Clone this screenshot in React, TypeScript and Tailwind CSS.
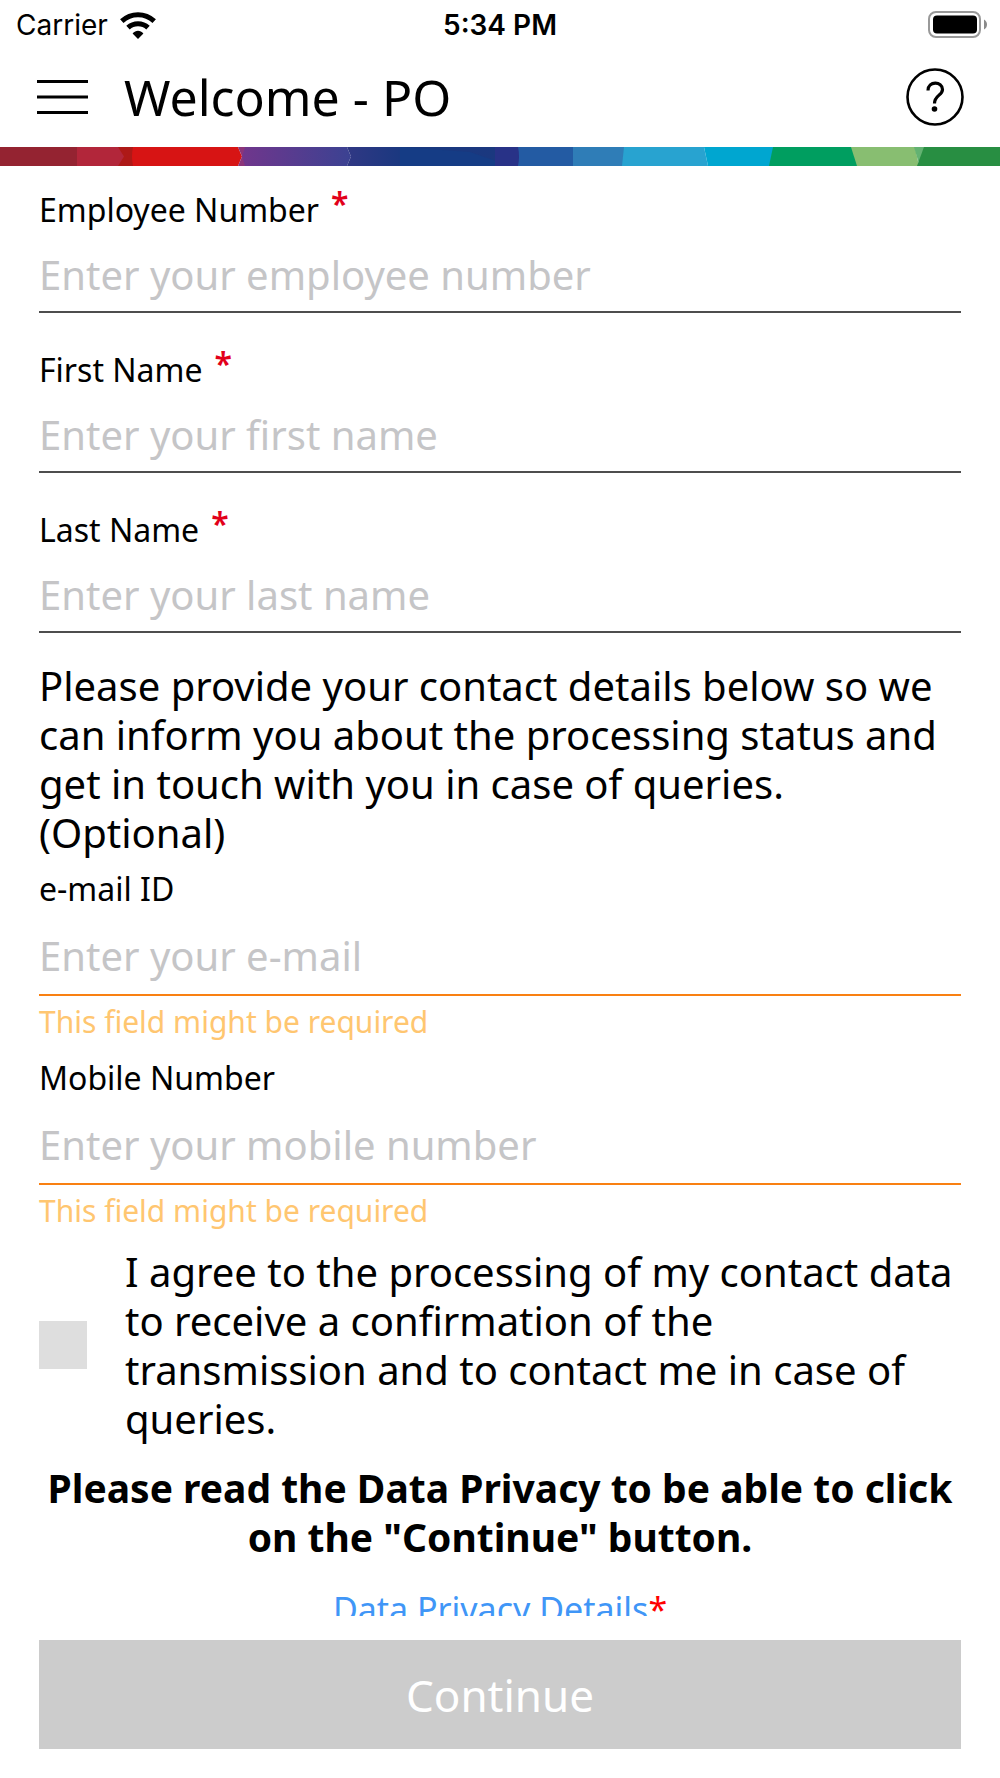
import { useState } from 'react';

interface FieldProps {
  id: string;
  label: string;
  placeholder: string;
  type?: string;
  required?: boolean;
  warning?: string;
}

function Field({ id, label, placeholder, type = 'text', required, warning }: FieldProps) {
  return (
    <div>
      <label htmlFor={id} className="flex gap-3 text-[32px] leading-10">
        {label}
        {required && <span className="-mt-1.5 text-[#e2001a] font-semibold">*</span>}
      </label>
      <input
        id={id}
        type={type}
        placeholder={placeholder}
        className={`mt-[7px] block w-full border-b-2 bg-transparent text-[40px] outline-none placeholder:text-[#c5c5c7] ${
          warning ? 'h-20 border-[#f98012]' : 'h-[76px] border-[#4d4d4d]'
        }`}
      />
      {warning && <p className="mt-1.5 text-[30px] leading-10 text-[#ffc670]">{warning}</p>}
    </div>
  );
}

function StatusBar() {
  return (
    <div className="grid h-[50px] grid-cols-3 items-center px-3 font-[Inter,sans-serif] text-[28px]">
      <div className="flex items-center gap-3 pl-1">
        <span>Carrier</span>
        <svg width="36" height="27" viewBox="0 0 36 27" fill="none" stroke="#000">
          <path d="M1.8 9.2C11 0.6 25 0.6 34.2 9.2" strokeWidth="5" />
          <path d="M8 15.6C13.6 10.4 22.4 10.4 28 15.6" strokeWidth="5" />
          <path d="M12.6 21.4C15.8 18 20.2 18 23.4 21.4L18 27Z" fill="#000" stroke="none" />
        </svg>
      </div>
      <span className="text-center font-semibold">5:34 PM</span>
      <svg className="justify-self-end" width="60" height="28" viewBox="0 0 60 28">
        <rect x="1" y="1" width="51" height="25" rx="7" fill="none" stroke="#999" strokeWidth="2" />
        <rect x="5" y="4.500" width="44" height="18" rx="4" />
        <path d="M56 8.500c4 2 4 8 0 10Z" fill="#8a8a8a" />
      </svg>
    </div>
  );
}

function ColorStrip() {
  return (
    <svg className="block h-[19px] w-full" viewBox="0 0 1000 19" preserveAspectRatio="none">
      <defs>
        <linearGradient id="violet" x1="0" x2="1">
          <stop offset="0" stopColor="#70368c" />
          <stop offset="1" stopColor="#3b4292" />
        </linearGradient>
        <linearGradient id="navy" x1="0" x2="1">
          <stop offset="0" stopColor="#303884" />
          <stop offset="0.4" stopColor="#18387f" />
          <stop offset="1" stopColor="#1b387f" />
        </linearGradient>
      </defs>
      <rect width="78" height="19" fill="#942331" />
      <rect x="77" width="48" height="19" fill="#b2263a" />
      <path d="M118 0H140V19H118L124 9.5Z" fill="#ae1917" />
      <path d="M133 0H238L242 9.5L238 19H133Q131 9.5 133 0Z" fill="#d71414" />
      <path d="M238 0H247L243 9.5L247 19H238L242 9.5Z" fill="#8c3479" />
      <path d="M245 0H347L351 9.5L347 19H245L242 9.5Z" fill="url(#violet)" />
      <path d="M347 0H496V19H347L351 9.5Z" fill="url(#navy)" />
      <path d="M400 0L470 5L496 14V19H400Z" fill="#153c85" />
      <path d="M495 0H520V19H495Z" fill="#283287" />
      <path d="M518 0H574V19H518Q520 9.5 518 0Z" fill="#235ba3" />
      <rect x="573" width="52" height="19" fill="#2f7db7" />
      <path d="M624 0H704L708 19H622Z" fill="#28a3d0" />
      <path d="M704 0H774L770 19H708Z" fill="#00a6d0" />
      <path d="M773 0H852L858 19H769Z" fill="#009e60" />
      <path d="M851 0H915L919 19H857Z" fill="#88be71" />
      <path d="M914 0H925L919 17Z" fill="#63b272" />
      <path d="M924 0H1000V19H917Z" fill="#288e42" />
    </svg>
  );
}

export default function App() {
  const [agreed, setAgreed] = useState(false);

  return (
    <div className="flex h-screen flex-col bg-white font-['Noto_Sans',sans-serif] text-black">
      <StatusBar />

      {/* Header */}
      <header className="flex h-[97px] items-center px-9 pb-[3px]">
        <button aria-label="Menu">
          <svg width="52" height="36" viewBox="0 0 52 36" stroke="#000" strokeWidth="3">
            <path d="M1 2.5H52M1 18H52M1 33.5H52" />
          </svg>
        </button>
        <h1 className="ml-9 flex-1 text-[50px] leading-none">Welcome - PO</h1>
        <button aria-label="Help">
          <svg width="58" height="58" viewBox="0 0 58 58" fill="none" stroke="#000" strokeWidth="2.6">
            <circle cx="29" cy="29" r="27.5" />
            <path d="M22 22.5C22 12.5 36.5 13 36.5 21.5C36.5 27.5 28.5 27 28.5 35.5" strokeWidth="3.2" />
            <circle cx="28.5" cy="41" r="2.8" fill="#000" stroke="none" />
          </svg>
        </button>
      </header>
      <ColorStrip />

      {/* Form */}
      <main className="min-h-0 flex-1 overflow-hidden px-[39px] pt-6">
        <div className="flex flex-col gap-[37px]">
          <Field id="employee" label="Employee Number" placeholder="Enter your employee number" required />
          <Field id="first" label="First Name" placeholder="Enter your first name" required />
          <Field id="last" label="Last Name" placeholder="Enter your last name" required />
        </div>

        <p className="mt-7 text-[40px] leading-[49px]">
          Please provide your contact details below so we can inform you about the processing status and get in
          touch with you in case of queries. (Optional)
        </p>

        <div className="mt-3 flex flex-col gap-4">
          <Field
            id="email"
            type="email"
            label="e-mail ID"
            placeholder="Enter your e-mail"
            warning="This field might be required"
          />
          <Field
            id="mobile"
            type="tel"
            label="Mobile Number"
            placeholder="Enter your mobile number"
            warning="This field might be required"
          />
        </div>

        <div className="mt-4 flex items-center gap-[38px]">
          <input
            id="agree"
            type="checkbox"
            checked={agreed}
            onChange={(e) => setAgreed(e.target.checked)}
            className="size-12 shrink-0 appearance-none bg-[#dedede] checked:bg-[#4096f7]"
          />
          <label htmlFor="agree" className="text-[40px] leading-[49px]">
            I agree to the processing of my contact data to receive a confirmation of the transmission and to
            contact me in case of queries.
          </label>
        </div>

        <p className="mt-5 text-center text-[39px] font-bold leading-[49px]">
          Please read the Data Privacy to be able to click on the "Continue" button.
        </p>

        <p className="mt-6 text-center text-[34px] leading-[49px]">
          <a href="#privacy" className="text-[#4096f7]">
            Data Privacy Details
          </a>
          <span className="text-[#ff0000]">*</span>
        </p>
      </main>

      {/* Footer */}
      <footer className="px-[39px] pt-6 pb-[29px]">
        <button disabled className="h-[109px] w-full bg-[#cccccc] text-[44px] text-white">
          Continue
        </button>
      </footer>
    </div>
  );
}
